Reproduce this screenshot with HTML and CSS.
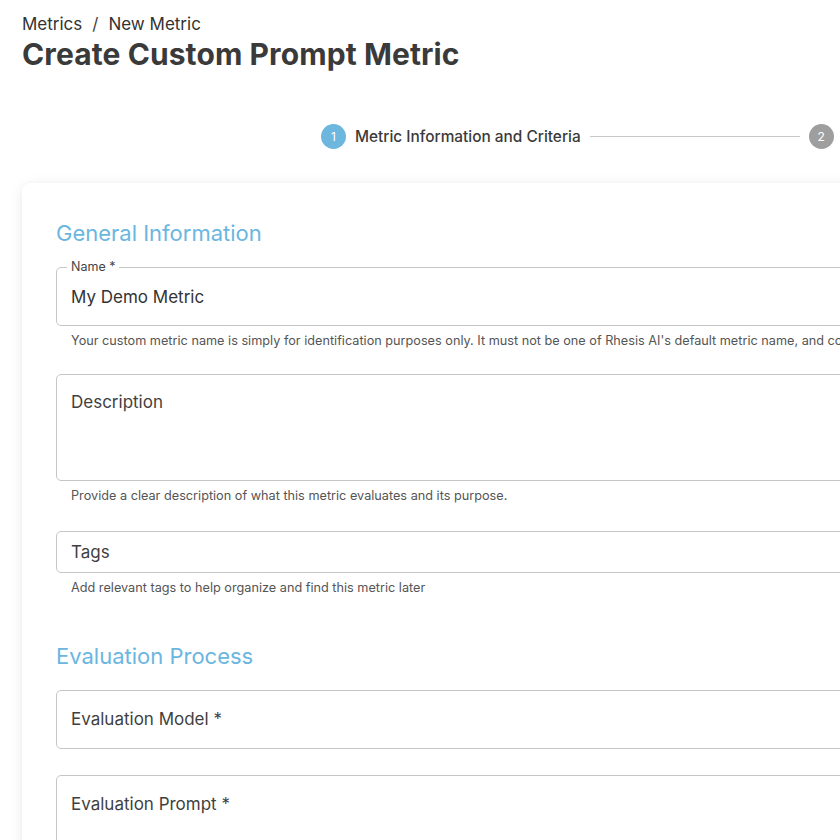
FILE: index.html
```html
<!DOCTYPE html>
<html lang="en">
<head>
<meta charset="utf-8">
<title>Create Custom Prompt Metric</title>
<link rel="stylesheet" href="styles.css">
</head>
<body>
<div class="page">
  <nav class="breadcrumb"><span>Metrics</span><span class="sep">/</span><span>New Metric</span></nav>
  <h1 class="title">Create Custom Prompt Metric</h1>

  <div class="stepper">
    <div class="step">
      <span class="step-num active">1</span>
      <span class="step-label">Metric Information and Criteria</span>
    </div>
    <div class="step-line"></div>
    <div class="step">
      <span class="step-num">2</span>
    </div>
  </div>

  <div class="card">
    <h2 class="section-title">General Information</h2>

    <fieldset class="field field-name">
      <legend>Name *</legend>
      <div class="value">My Demo Metric</div>
    </fieldset>
    <p class="helper">Your custom metric name is simply for identification purposes only. It must not be one of Rhesis AI's default metric name, and co</p>

    <div class="field field-desc"><span class="placeholder">Description</span></div>
    <p class="helper">Provide a clear description of what this metric evaluates and its purpose.</p>

    <div class="field field-tags"><span class="placeholder">Tags</span></div>
    <p class="helper">Add relevant tags to help organize and find this metric later</p>

    <h2 class="section-title section-2">Evaluation Process</h2>

    <div class="field field-model"><span class="placeholder">Evaluation Model *</span></div>

    <div class="field field-prompt"><span class="placeholder">Evaluation Prompt *</span></div>
  </div>
</div>
</body>
</html>
```

FILE: styles.css
```css
* { box-sizing: border-box; }

html, body {
  margin: 0;
  padding: 0;
  background: #ffffff;
  overflow: hidden;
}

body {
  font-family: "Inter", "Noto Sans", sans-serif;
  color: #3c3c3c;
  width: 840px;
  height: 840px;
}

.page {
  padding: 13px 0 0 22px;
  width: 1200px;
}

.breadcrumb {
  font-size: 17px;
  line-height: 22px;
  color: #333;
  display: flex;
  gap: 10px;
}

.breadcrumb .sep { color: #444; }

.title {
  margin: 1px 0 0 0;
  font-size: 30px;
  line-height: 36px;
  font-weight: 700;
  color: #3a3a3a;
  letter-spacing: 0.1px;
}

.stepper {
  display: flex;
  align-items: center;
  margin-top: 51px;
  margin-left: 299px;
  height: 26px;
}

.step {
  display: flex;
  align-items: center;
  gap: 9px;
}

.step-num {
  width: 25px;
  height: 25px;
  border-radius: 50%;
  background: #9e9e9e;
  color: #fff;
  font-size: 12px;
  display: flex;
  align-items: center;
  justify-content: center;
}

.step-num.active { background: #6db7df; }

.step-label {
  font-size: 15.4px;
  font-weight: 500;
  color: #3a3a3a;
}

.step-line {
  width: 210px;
  height: 1px;
  background: #c9c9c9;
  margin: 0 9px 0 9px;
}

.card {
  margin-top: 34px;
  width: 1000px;
  background: #fff;
  border-radius: 8px;
  box-shadow: 0 2px 14px rgba(0, 0, 0, 0.08), 0 0 3px rgba(0, 0, 0, 0.03);
  padding: 35px 34px 60px 34px;
  min-height: 700px;
}

.section-title {
  margin: 0;
  font-size: 22px;
  line-height: 30px;
  font-weight: 400;
  color: #6bb6df;
}

.field {
  border: 1px solid #c6c6c6;
  border-radius: 5px;
  padding: 0 14px;
  margin: 0;
}

fieldset.field {
  min-width: 0;
}

.field-name {
  margin-top: 12px;
  height: 66px;
  padding-top: 0;
}

.field-name legend {
  font-size: 12.5px;
  line-height: 14px;
  color: #444;
  padding: 0 4px;
  margin-left: -4px;
}

.field-name .value {
  font-size: 17px;
  line-height: 22px;
  color: #333;
  margin-top: 12px;
}

.placeholder {
  font-size: 17px;
  line-height: 22px;
  color: #3f3f3f;
  display: block;
}

.helper {
  margin: 6px 0 0 15px;
  font-size: 12.7px;
  line-height: 17px;
  color: #555;
  white-space: nowrap;
}

.field-desc {
  margin-top: 25px;
  height: 107px;
  padding-top: 16px;
}

.field-tags {
  margin-top: 27px;
  height: 42px;
  padding-top: 9px;
}

.section-2 {
  margin-top: 45px;
}

.field-model {
  margin-top: 19px;
  height: 59px;
  padding-top: 17px;
}

.field-prompt {
  margin-top: 26px;
  height: 120px;
  padding-top: 17px;
}
```
